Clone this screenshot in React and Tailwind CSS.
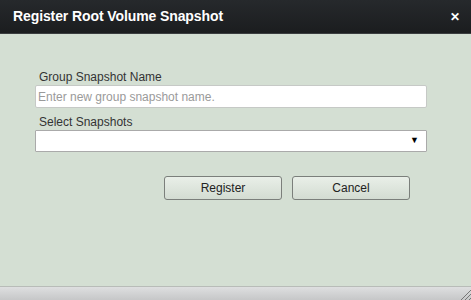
export default function App() {
  return (
    <div className="w-[471px] h-[300px] flex flex-col bg-[#d4dfd3] overflow-hidden" style={{ fontFamily: '"Liberation Sans", Arial, sans-serif' }}>
      <div className="h-[34px] shrink-0 flex items-center justify-between pl-[13px] pr-[11px] bg-gradient-to-b from-[#26292c] to-[#1b1d1f] border-b border-[#3a3d3f]">
        <span className="text-white font-bold text-[14px] tracking-[-0.1px]">Register Root Volume Snapshot</span>
        <span className="text-white font-bold text-[12px] leading-none">✕</span>
      </div>
      <div className="flex-1 flex flex-col px-[35px] pt-[36px]">
        <label className="text-[12px] text-[#333] pl-[4px] leading-[14px]">Group Snapshot Name</label>
        <div className="mt-[1px] h-[23px] w-[392px] bg-white border border-[#c6c9c6] rounded-[2px] flex items-center px-[2px] text-[12px] text-[#9a9a9a]">Enter new group snapshot name.</div>
        <label className="mt-[7px] text-[12px] text-[#333] pl-[4px] leading-[14px]">Select Snapshots</label>
        <div className="mt-[1px] h-[22px] w-[392px] bg-white border border-[#aaa] rounded-[1px] flex items-center justify-end pr-[7px] text-[9px] text-black">▼</div>
        <div className="mt-[24px] flex gap-[10px] pl-[129px]">
          <button className="w-[118px] h-[24px] rounded-[3px] border border-[#7b7f7b] bg-gradient-to-b from-[#e9efe8] to-[#d3dcd2] text-[12px] text-[#222]">Register</button>
          <button className="w-[118px] h-[24px] rounded-[3px] border border-[#7b7f7b] bg-gradient-to-b from-[#e9efe8] to-[#d3dcd2] text-[12px] text-[#222]">Cancel</button>
        </div>
      </div>
      <div className="h-[14px] shrink-0 border-t border-[#b8bcb8] bg-gradient-to-b from-[#dedfe0] to-[#c6c7c8] flex justify-end items-end">
        <svg width="11" height="11" viewBox="0 0 11 11">
          <path d="M1 11 L11 1 M5 11 L11 5 M9 11 L11 9" stroke="#777" strokeWidth="1" />
        </svg>
      </div>
    </div>
  );
}
